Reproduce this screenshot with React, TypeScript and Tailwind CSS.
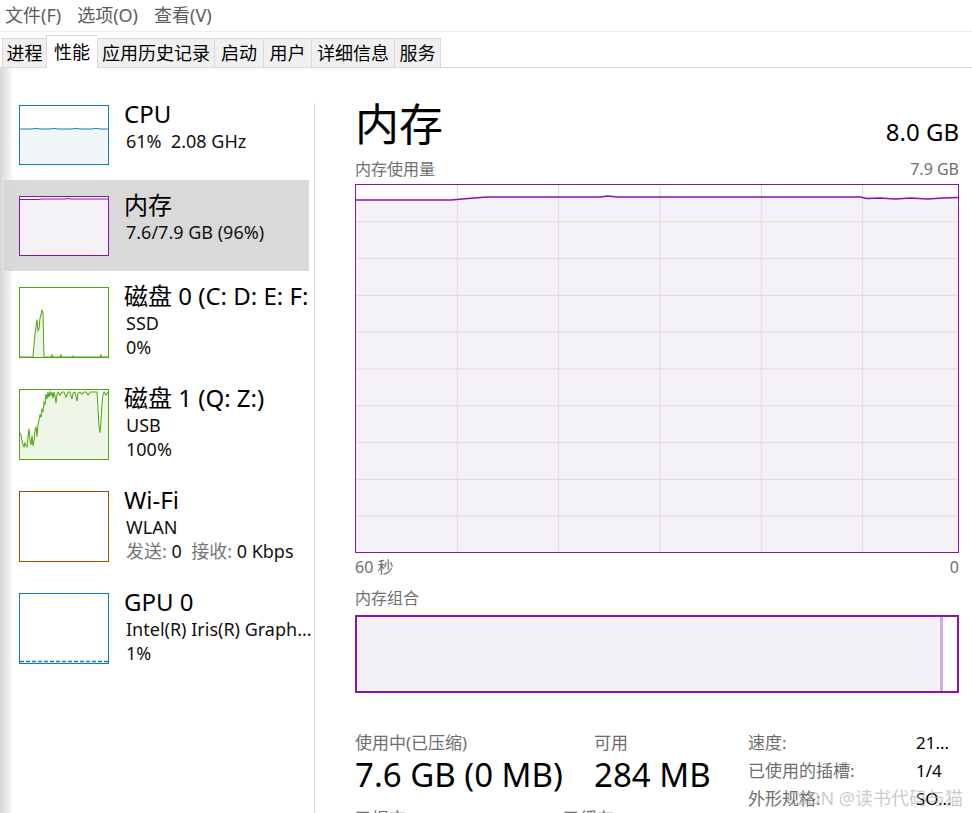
import type { ReactNode } from 'react';

const FONT = "font-['Noto_Sans','Noto_Sans_CJK_SC',sans-serif]";

const MENU = ['文件(F)', '选项(O)', '查看(V)'];

const TABS = [
  { label: '进程', w: 'w-[44px]' },
  { label: '性能', w: 'w-[51px]', active: true },
  { label: '应用历史记录', w: 'w-[117px]' },
  { label: '启动', w: 'w-[49px]' },
  { label: '用户', w: 'w-[48px]' },
  { label: '详细信息', w: 'w-[83px]' },
  { label: '服务', w: 'w-[47px]', last: true },
];

// sparkline points, in a 88 x 68 box
const DISK0 =
  '0,68 13,68 14,56 15,46 16,38 17,31 18,42 19,40 20,30 21,26 22,22 23,24 24,68 31,68 32,66 33,68 40,68 41,66 42,68 52,68 53,67 54,68 80,68 81,66 82,68 88,68';
const DISK1 =
  '0,42 1,44 2,50 3,54 4,56 5,52 6,55 7,56 8,46 9,38 10,50 11,54 12,45 13,55 14,50 15,40 16,36 17,46 18,34 19,30 20,24 21,27 22,19 23,21 24,12 25,14 26,4 27,9 28,2 29,7 30,2 31,5 32,2 33,8 34,2 35,6 36,13 37,4 38,2 40,5 42,2 44,2 46,7 48,2 50,2 52,9 53,3 55,2 57,11 58,3 60,2 62,4 64,2 66,2 68,5 70,2 74,2 77,2 78,18 79,36 80,42 81,30 82,14 83,4 84,2 86,5 88,2';

function Thumb({ color, h, children }: { color: string; h: string; children?: ReactNode }) {
  return (
    <div className={`w-[90px] ${h} shrink-0 border bg-white ${color}`}>
      {children}
    </div>
  );
}

function SideItem({
  thumb,
  title,
  lines,
  tall,
  selected,
}: {
  thumb: ReactNode;
  title: string;
  lines: ReactNode[];
  tall?: boolean;
  selected?: boolean;
}) {
  return (
    <div
      className={`flex ml-[4px] w-[305px] pl-[15px] ${tall ? 'h-[102px]' : 'h-[91px]'} ${
        selected ? 'bg-[#d9d9d9]' : ''
      }`}
    >
      <div className="pt-[16px]">{thumb}</div>
      <div className="flex-1 min-w-0 -mr-[4px] pl-[15px] pt-[10px] overflow-hidden">
        <div className="text-[24px] leading-[30px] text-black whitespace-nowrap">{title}</div>
        {lines.map((l, i) => (
          <div key={i} className="pl-[2px] text-[18px] leading-[24px] text-[#111] whitespace-pre truncate">
            {l}
          </div>
        ))}
      </div>
    </div>
  );
}

function UsageChart() {
  const cols = [1, 2, 3, 4, 5];
  const rows = [1, 2, 3, 4, 5, 6, 7, 8, 9];
  const line =
    '0,15 95,15 112,13.5 131,12 245,12 252,11 262,12 505,12 512,13.5 525,13 540,14 556,13 572,14 588,13 603,12.5';
  return (
    <div className="mt-[4px] h-[369px] border border-[#8b12ae] bg-white">
      <svg viewBox="0 0 603 367" preserveAspectRatio="none" className="block w-full h-full">
        <polygon points={`${line} 603,367 0,367`} fill="#f4f2f6" />
        {cols.map((c) => (
          <line key={c} x1={c * 101.5} x2={c * 101.5} y1={0} y2={367} stroke="#e2d6e8" strokeWidth={1} />
        ))}
        {rows.map((r) => (
          <line key={r} x1={0} x2={603} y1={r * 36.8} y2={r * 36.8} stroke="#e2d6e8" strokeWidth={1} />
        ))}
        <polyline points={line} fill="none" stroke="#8b12ae" strokeWidth={1.3} />
      </svg>
    </div>
  );
}

export default function App() {
  return (
    <div className={`relative w-[972px] h-[813px] overflow-hidden bg-white text-black ${FONT}`}>
      {/* Menu */}
      <div className="flex items-center h-[32px] pl-[5px] gap-[16px] text-[18px] text-[#5c5c5c] border-b border-[#efefef]">
        {MENU.map((m) => (
          <span key={m}>{m}</span>
        ))}
      </div>

      {/* Tabs */}
      <div className="flex items-end h-[36px] pl-[2px] border-b border-[#d9d9d9]">
        {TABS.map((t) =>
          t.active ? (
            <div
              key={t.label}
              className={`${t.w} h-[33px] -mb-px flex items-center justify-center bg-white border-l border-t border-[#d9d9d9] text-[18px] relative z-10`}
            >
              {t.label}
            </div>
          ) : (
            <div
              key={t.label}
              className={`${t.w} h-[29px] flex items-center justify-center bg-[#f0f0f0] border-l border-t ${
                t.last ? 'border-r' : ''
              } border-[#d9d9d9] text-[18px]`}
            >
              {t.label}
            </div>
          ),
        )}
      </div>

      {/* Body */}
      <div className="relative flex h-[745px]">
        <div className="absolute left-0 top-0 bottom-0 w-[14px] bg-gradient-to-r from-[#d6d6d6] to-transparent z-10" />

        {/* Sidebar */}
        <div className="w-[314px] shrink-0 pt-[21px]">
          <SideItem
            title="CPU"
            lines={['61%  2.08 GHz']}
            thumb={
              <Thumb color="border-[#117dbb]" h="h-[60px]">
                <svg viewBox="0 0 88 58" preserveAspectRatio="none" className="block w-full h-full">
                  <polygon
                    points="0,23 12,23 16,22.3 20,23 30,23 34,22.3 38,23 52,23 56,22.3 60,23 72,23 76,22.3 80,23 88,23 88,58 0,58"
                    fill="#f1f6fa"
                  />
                  <polyline
                    points="0,23 12,23 16,22.3 20,23 30,23 34,22.3 38,23 52,23 56,22.3 60,23 72,23 76,22.3 80,23 88,23"
                    fill="none"
                    stroke="#117dbb"
                    strokeWidth={1}
                  />
                </svg>
              </Thumb>
            }
          />
          <SideItem
            selected
            title="内存"
            lines={['7.6/7.9 GB (96%)']}
            thumb={
              <Thumb color="border-[#8b12ae]" h="h-[60px]">
                <svg viewBox="0 0 88 58" preserveAspectRatio="none" className="block w-full h-full">
                  <polygon points="0,2.5 18,2.5 22,2 46,2 48,1.5 50,2 88,2 88,58 0,58" fill="#f4f2f6" />
                  <polyline
                    points="0,2.5 18,2.5 22,2 46,2 48,1.5 50,2 88,2"
                    fill="none"
                    stroke="#8b12ae"
                    strokeWidth={1}
                  />
                </svg>
              </Thumb>
            }
          />
          <SideItem
            tall
            title="磁盘 0 (C: D: E: F:"
            lines={['SSD', '0%']}
            thumb={
              <Thumb color="border-[#4da60c]" h="h-[71px]">
                <svg viewBox="0 0 88 68" preserveAspectRatio="none" className="block w-full h-full">
                  <polygon points={DISK0} fill="#eef6e8" />
                  <polyline points={DISK0} fill="none" stroke="#4da60c" strokeWidth={1} />
                </svg>
              </Thumb>
            }
          />
          <SideItem
            tall
            title="磁盘 1 (Q: Z:)"
            lines={['USB', '100%']}
            thumb={
              <Thumb color="border-[#4da60c]" h="h-[71px]">
                <svg viewBox="0 0 88 68" preserveAspectRatio="none" className="block w-full h-full">
                  <polygon points={`${DISK1} 88,68 0,68`} fill="#eef6e8" />
                  <polyline points={DISK1} fill="none" stroke="#4da60c" strokeWidth={1} />
                </svg>
              </Thumb>
            }
          />
          <SideItem
            tall
            title="Wi-Fi"
            lines={[
              'WLAN',
              <span key="n">
                <span className="text-[#777]">发送:</span>
                {' 0  '}
                <span className="text-[#777]">接收:</span>
                {' 0 Kbps'}
              </span>,
            ]}
            thumb={<Thumb color="border-[#a74f01]" h="h-[71px]" />}
          />
          <SideItem
            tall
            title="GPU 0"
            lines={['Intel(R) Iris(R) Graphics', '1%']}
            thumb={
              <Thumb color="border-[#117dbb]" h="h-[71px]">
                <svg viewBox="0 0 88 68" preserveAspectRatio="none" className="block w-full h-full">
                  <line x1={0} x2={88} y1={66.5} y2={66.5} stroke="#117dbb" strokeWidth={1.5} strokeDasharray="4 2" />
                </svg>
              </Thumb>
            }
          />
        </div>

        <div className="w-px bg-[#dadada] mt-[35px] shrink-0" />

        {/* Detail */}
        <div className="flex-1 pl-[40px] pr-[13px]">
          <div className="flex items-baseline justify-between mt-[26px] h-[60px]">
            <span className="text-[44px] leading-[60px]">内存</span>
            <span className="text-[24px]">8.0 GB</span>
          </div>
          <div className="flex justify-between mt-[4px] text-[16px] leading-[22px] text-[#707070]">
            <span>内存使用量</span>
            <span>7.9 GB</span>
          </div>
          <UsageChart />
          <div className="flex justify-between mt-[3px] text-[16px] leading-[22px] text-[#707070]">
            <span>60 秒</span>
            <span>0</span>
          </div>
          <div className="mt-[9px] text-[16px] leading-[22px] text-[#707070]">内存组合</div>
          <div className="mt-[6px] h-[78px] flex border-2 border-[#8b12ae] bg-white">
            <div className="flex-1 bg-[#f3f1f5]" />
            <div className="w-[3px] bg-[#cfb0dd]" />
            <div className="w-[14px]" />
          </div>

          {/* Stats */}
          <div className="flex mt-[36px]">
            <div className="w-[239px] pt-[2px]">
              <div className="text-[17px] leading-[24px] text-[#6d6d6d]">使用中(已压缩)</div>
              <div className="text-[33px] leading-[40px]">7.6 GB (0 MB)</div>
            </div>
            <div className="w-[154px] pt-[2px]">
              <div className="text-[17px] leading-[24px] text-[#6d6d6d]">可用</div>
              <div className="text-[33px] leading-[40px]">284 MB</div>
            </div>
            <div className="flex-1 text-[17px] leading-[28px]">
              {[
                ['速度:', '21...'],
                ['已使用的插槽:', '1/4'],
                ['外形规格:', 'SO...'],
              ].map(([k, v]) => (
                <div key={k} className="flex">
                  <span className="w-[168px] text-[#6d6d6d]">{k}</span>
                  <span>{v}</span>
                </div>
              ))}
            </div>
          </div>
          <div className="flex -mt-[6px] text-[17px] leading-[24px] text-[#6d6d6d]">
            <span className="w-[208px]">已提交</span>
            <span>已缓存</span>
          </div>
        </div>
      </div>

      {/* watermark */}
      <div className="absolute left-[786px] top-[786px] text-[18px] leading-[24px] text-[#b4b4b4]/70 whitespace-nowrap">
        CSDN @读书代码与猫
      </div>
    </div>
  );
}
